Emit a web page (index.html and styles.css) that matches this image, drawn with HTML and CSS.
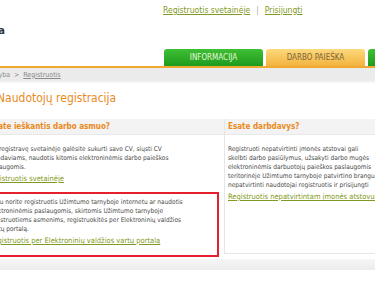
FILE: index.html
```html
<!DOCTYPE html>
<html lang="lt">
<head>
<meta charset="utf-8">
<title>Naudotojų registracija</title>
<link rel="stylesheet" href="styles.css">
</head>
<body>
<div class="page">
  <header class="header">
    <nav class="toplinks">
      <a href="#">Registruotis svetainėje</a>
      <span class="sep">|</span>
      <a href="#">Prisijungti</a>
    </nav>
    <div class="logo"><span>Užimtumo tarnyba</span></div>
    <nav class="tabs">
      <a class="tab tab-green" href="#">INFORMACIJA</a>
      <a class="tab tab-orange" href="#">DARBO PAIEŠKA</a>
      <a class="tab tab-green" href="#">DARBDAVIAMS</a>
    </nav>
  </header>
  <div class="crumbs">
    <div class="crumb-home"><span>Užimtumo tarnyba</span></div>
    <span class="crumb-sep">&gt;</span>
    <a href="#">Registruotis</a>
  </div>
  <main class="content">
    <h1 class="title">Naudotojų registracija</h1>
    <div class="panels">
      <section class="col col-left">
        <h2 class="col-head">Esate ieškantis darbo asmuo?</h2>
        <div class="col-body">
          <p class="txt">Užsiregistravę svetainėje galėsite sukurti savo CV, siųsti CV<br>darbdaviams, naudotis kitomis elektroninėmis darbo paieškos<br>paslaugomis.</p>
          <a class="lnk" href="#">Registruotis svetainėje</a>
          <div class="redbox">
            <p class="txt">Jeigu norite registruotis Užimtumo tarnyboje internetu ar naudotis<br>elektroninėmis paslaugomis, skirtomis Užimtumo tarnyboje<br>registruotiems asmenims, registruokitės per Elektroninių valdžios<br>vartų portalą.</p>
            <a class="lnk" href="#">Registruotis per Elektroninių valdžios vartų portalą</a>
          </div>
        </div>
      </section>
      <section class="col col-right">
        <h2 class="col-head">Esate darbdavys?</h2>
        <div class="col-body">
          <p class="txt">Registruoti nepatvirtinti įmonės atstovai gali<br>skelbti darbo pasiūlymus, užsakyti darbo mugės<br>elektroninėmis darbuotojų paieškos paslaugomis<br>teritorinėje Užimtumo tarnyboje patvirtino brangu<br>nepatvirtinti naudotojai registruotis ir prisijungti</p>
          <a class="lnk" href="#">Registruotis nepatvirtintam įmonės atstovui</a>
        </div>
      </section>
    </div>
  </main>
  <div class="footbar"></div>
</div>
</body>
</html>
```

FILE: styles.css
```css
html, body {
  margin: 0;
  padding: 0;
  background: #fff;
  overflow: hidden;
}
body {
  font-family: "DejaVu Sans Condensed", "DejaVu Sans", sans-serif;
  font-stretch: condensed;
  color: #333;
}
a { color: #7f9a22; }

.page { width: 375px; }

.header {
  display: flex;
  flex-direction: column;
  height: 66px;
  border-bottom: 2px solid #efa830;
}
.toplinks {
  margin: 5px 0 0 163px;
  font-size: 8.5px;
  line-height: 10px;
  display: flex;
  gap: 6px;
}
.toplinks .sep { color: #aaa; }
.logo {
  width: 5px;
  display: flex;
  justify-content: flex-end;
  white-space: nowrap;
  margin-top: 10px;
  font-size: 11px;
  font-weight: bold;
  color: #333;
  line-height: 12px;
}
.tabs {
  margin: auto 0 0 164px;
  display: flex;
  gap: 3px;
}
.tab {
  flex: 0 0 99px;
  height: 17px;
  border-radius: 3px 3px 0 0;
  display: flex;
  align-items: center;
  justify-content: center;
  font-size: 8px;
  text-decoration: none;
  white-space: nowrap;
}
.tab-green {
  background: linear-gradient(#3fbf35, #1f9b1d);
  color: #e9f7d8;
}
.tab-orange {
  background: linear-gradient(#fcd97c, #f2b33d);
  color: #7b6540;
}

.crumbs {
  display: flex;
  align-items: center;
  gap: 4px;
  height: 13px;
  background: #ebebeb;
  border-bottom: 2px solid #f6f6f6;
  font-size: 7px;
  color: #8a8a8a;
}
.crumb-home {
  width: 10px;
  display: flex;
  justify-content: flex-end;
  white-space: nowrap;
}
.crumbs a { color: #8a8a8a; }

.content { margin-left: -27px; }
.title {
  margin: 0;
  padding: 7px 0 0 24px;
  font-weight: normal;
  font-size: 12px;
  line-height: 16px;
  color: #ea8a1c;
}
.panels {
  display: grid;
  grid-template-columns: 251px 200px;
  align-items: start;
  margin-top: 13px;
}
.col-head {
  margin: 0;
  height: 15px;
  padding-left: 16px;
  background: #f3f3f3;
  border-bottom: 1px solid #e9e9e9;
  font-size: 8px;
  line-height: 15px;
  font-weight: bold;
  color: #ea8a1c;
  white-space: nowrap;
}
.col-right {
  border-left: 1px solid #e6e6e6;
  border-bottom: 1px solid #e6e6e6;
  padding-bottom: 51px;
}
.col-right .col-head { padding-left: 3px; }
.col-body {
  padding: 10px 0 0 14px;
  font-size: 6.5px;
  line-height: 9px;
  white-space: nowrap;
}
.col-right .col-body { padding-left: 3px; }
.txt { margin: 0 0 2px; color: #4a4a4a; }
.lnk {
  display: block;
  font-size: 7.5px;
  line-height: 10px;
}
.redbox {
  margin: 8px 5px 0 -20px;
  padding: 4px 0 9px 20px;
  border: 2px solid #e4202c;
}
.footbar {
  margin-top: 2px;
  height: 11px;
  background: linear-gradient(#f6f6f6, #ececec);
}
```
